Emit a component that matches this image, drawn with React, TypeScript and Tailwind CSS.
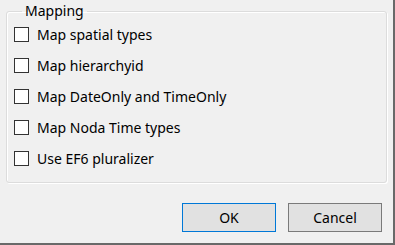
import React from "react";

const options = [
  "Map spatial types",
  "Map hierarchyid",
  "Map DateOnly and TimeOnly",
  "Map Noda Time types",
  "Use EF6 pluralizer",
];

function Checkbox({ label }: { label: string }) {
  return (
    <label className="flex h-[31px] items-center gap-2">
      <span className="h-[15px] w-[15px] shrink-0 border border-[#333333] bg-white" />
      <span className="text-[14px] leading-none text-black">{label}</span>
    </label>
  );
}

function DialogButton({ label, primary }: { label: string; primary?: boolean }) {
  return (
    <button
      className={
        "h-[29px] w-[94px] bg-[#e1e1e1] text-[14px] text-black " +
        (primary ? "border border-[#0078d7]" : "border border-[#7a7a7a]")
      }
    >
      {label}
    </button>
  );
}

export default function App() {
  return (
    <div
      className="flex h-[245px] w-[395px] flex-col border-b-2 border-r-2 border-[#696969] bg-[#f0f0f0]"
      style={{ fontFamily: '"Noto Sans", "Open Sans", sans-serif' }}
    >
      <fieldset className="ml-[6px] mt-[1px] h-[182px] w-[381px] rounded-[3px] border border-[#dcdcdc] pl-[7px] shadow-[inset_1px_1px_0_#ffffff,1px_1px_0_#ffffff]">
        <legend className="ml-[8px] px-[3px] text-[14px] leading-[20px] text-black">
          Mapping
        </legend>
        <div className="-mt-[2px] flex flex-col">
          {options.map((o) => (
            <Checkbox key={o} label={o} />
          ))}
        </div>
      </fieldset>
      <div className="mt-[20px] flex justify-end gap-[12px] pr-[11px]">
        <DialogButton label="OK" primary />
        <DialogButton label="Cancel" />
      </div>
    </div>
  );
}
